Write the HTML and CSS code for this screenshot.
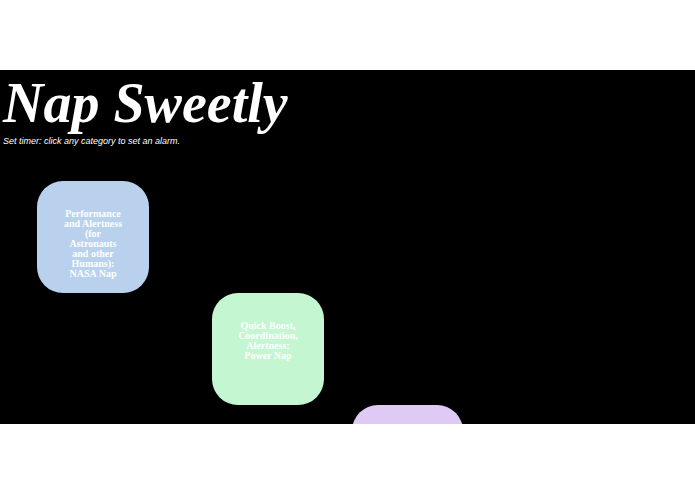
FILE: index.html
```html
<!DOCTYPE html>
<html>
<head>
<meta charset="utf-8">
<link rel="stylesheet" href="styles.css">
</head>
<body>
<main class="stage">
  <h1 class="title">Nap Sweetly</h1>
  <p class="hint">Set timer: click any category to set an alarm.</p>
  <div class="naps">
    <div class="nap nap-blue">Performance and Alertness (for Astronauts and other Humans): NASA Nap</div>
    <div class="nap nap-green">Quick Boost, Coordination, Alertness: Power Nap</div>
    <div class="nap nap-purple"></div>
  </div>
</main>
</body>
</html>
```

FILE: styles.css
```css
html, body {
  margin: 0;
  padding: 0;
  background: #ffffff;
}
.stage {
  margin-top: 70px;
  height: 354px;
  background: #000000;
  color: #ffffff;
  overflow: hidden;
  display: flex;
  flex-direction: column;
}
.title {
  margin: 0;
  padding-left: 3px;
  font-family: "Liberation Serif", "Times New Roman", serif;
  font-style: italic;
  font-weight: bold;
  font-size: 56px;
  line-height: 66px;
}
.hint {
  margin: 0;
  padding-left: 3px;
  font-family: "Liberation Sans", Arial, sans-serif;
  font-style: italic;
  font-size: 9px;
  line-height: 11px;
}
.naps {
  margin-top: 34px;
  display: flex;
  flex-direction: column;
  align-items: flex-start;
}
.nap {
  flex: none;
  box-sizing: border-box;
  width: 112px;
  height: 112px;
  border-radius: 26px;
  padding: 28px 26px 0;
  text-align: center;
  font-family: "Liberation Serif", "Times New Roman", serif;
  font-weight: bold;
  font-size: 10px;
  line-height: 10px;
  color: #ffffff;
}
.nap-blue {
  margin-left: 37px;
  background: #b9d1ec;
}
.nap-green {
  margin-left: 212px;
  background: #c4f6d2;
}
.nap-purple {
  margin-left: 352px;
  width: 111px;
  background: #dfcaf6;
}
```
